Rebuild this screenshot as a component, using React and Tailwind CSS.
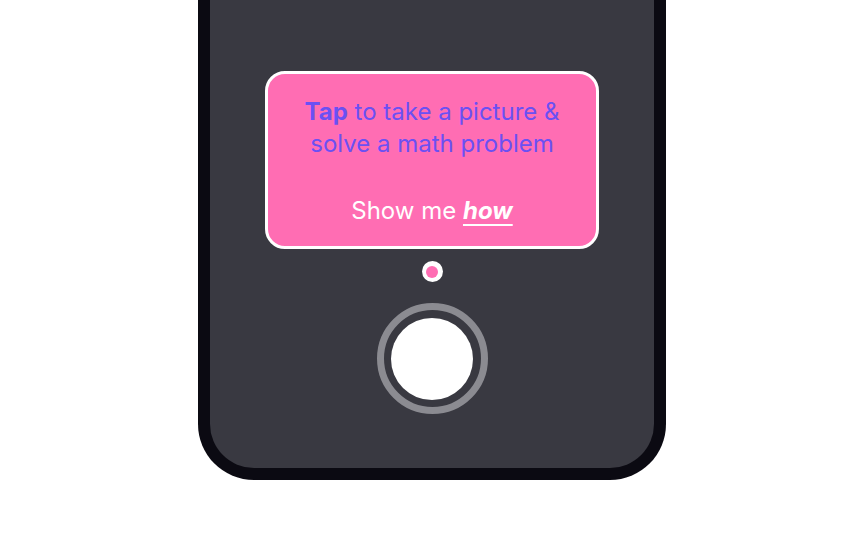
export default function App() {
  return (
    <div className="w-[864px] h-[540px] bg-white flex justify-center overflow-hidden" style={{ fontFamily: 'Inter, "Noto Sans", sans-serif' }}>
      {/* phone body, top cut off by the viewport */}
      <div className="w-[468px] h-[480px] bg-[#0b0a12] rounded-b-[56px] px-[12px] pb-[12px]">
        <div className="h-full bg-[#393941] rounded-b-[44px] flex flex-col items-center pt-[71px]">
          <div className="w-[334px] h-[178px] bg-[#ff6db3] border-[3px] border-white rounded-[20px] flex flex-col items-center pt-[22px] text-center">
            <p className="text-[24px] leading-[32px] text-[#6b50f3]">
              <span className="font-bold">Tap</span> to take a picture &amp;<br />solve a math problem
            </p>
            <p className="mt-[35px] text-[24px] leading-[32px] text-white">
              Show me <span className="font-bold italic underline underline-offset-[5px] decoration-2">how</span>
            </p>
          </div>
          <div className="mt-[12px] w-[21px] h-[21px] rounded-full bg-white flex items-center justify-center">
            <div className="w-[12px] h-[12px] rounded-full bg-[#ff6db3]" />
          </div>
          <div className="mt-[21px] w-[111px] h-[111px] rounded-full border-[7px] border-[#8b8b91] flex items-center justify-center">
            <div className="w-[82px] h-[82px] rounded-full bg-white" />
          </div>
        </div>
      </div>
    </div>
  );
}
